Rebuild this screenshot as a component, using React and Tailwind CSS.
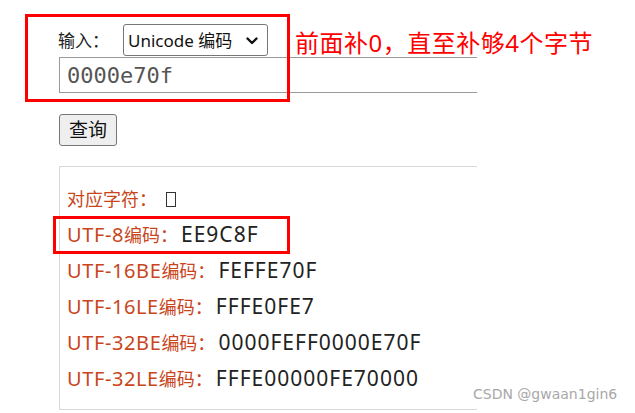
import React, { useState } from 'react';

const results = [
  { latin: 'UTF-8', value: 'EE9C8F' },
  { latin: 'UTF-16BE', value: 'FEFFE70F' },
  { latin: 'UTF-16LE', value: 'FFFE0FE7' },
  { latin: 'UTF-32BE', value: '0000FEFF0000E70F' },
  { latin: 'UTF-32LE', value: 'FFFE00000FE70000' },
];

const App = () => {
  const [code, setCode] = useState('0000e70f');
  const [encoding, setEncoding] = useState('unicode');

  return (
    <div
      className="relative w-[635px] h-[413px] overflow-hidden bg-white text-[#222]"
      style={{ fontFamily: '"Noto Sans", "Noto Sans CJK SC", sans-serif' }}
    >
      <div className="pl-[59px] pt-[24px]">
        {/* input row */}
        <div className="flex items-center h-[32px] -ml-[1px]">
          <span className="w-[65px] text-[17px] leading-none">输入：</span>
          <div className="relative">
            <select
              value={encoding}
              onChange={(e) => setEncoding(e.target.value)}
              className="appearance-none w-[145px] h-[32px] border border-[#767676] rounded-[3px] bg-white pl-[4px] text-[17px] leading-none text-[#111] outline-none"
            >
              <option value="unicode">Unicode 编码</option>
              <option value="utf8">UTF-8 编码</option>
            </select>
            <svg className="pointer-events-none absolute right-[10px] top-[13px] w-[12px] h-[8px]" viewBox="0 0 12 8" fill="none">
              <path d="M1.5 1.5 6 6l4.5-4.5" stroke="#111" strokeWidth="2.4" strokeLinecap="round" strokeLinejoin="round" />
            </svg>
          </div>
        </div>

        <input
          type="text"
          value={code}
          onChange={(e) => setCode(e.target.value)}
          className="block mt-[1px] w-[418px] h-[36px] border border-r-0 border-[#9a9a9a] pl-[7px] text-[22px] text-[#555] outline-none"
          style={{ fontFamily: '"DejaVu Sans Mono", monospace' }}
        />

        <button className="block mt-[21px] w-[58px] h-[32px] border border-[#767676] rounded-[3px] bg-[#efefef] text-[19px] leading-none text-[#111]">
          查询
        </button>

        {/* result panel */}
        <div className="mt-[20px] w-[418px] h-[244px] border-l border-t border-b border-[#d8d8d8] pt-[14px] pl-[7px]">
          <div className="flex items-center h-[36px]">
            <span className="text-[18px] text-[#c9461c]">对应字符：</span>
            <span className="ml-[9px] inline-block w-[10px] h-[15px] border-[1.5px] border-[#333]"></span>
          </div>
          {results.map((row) => (
            <div key={row.latin} className="flex items-center h-[36px] text-[#c9461c]">
              <span className="text-[20px] tracking-[0.6px]">{row.latin}</span>
              <span className="text-[18px]">编码：</span>
              <span className="ml-[3px] text-[21px] tracking-[1px] text-[#222]">{row.value}</span>
            </div>
          ))}
        </div>
      </div>

      {/* annotations */}
      <div className="absolute left-[25px] top-[14px] w-[265px] h-[88px] border-[3px] border-[#ff0000]"></div>
      <div className="absolute left-[295px] top-[29px] text-[24px] leading-[28px] tracking-[0.5px] text-[#ff0000] whitespace-nowrap">
        前面补0，直至补够4个字节
      </div>
      <div className="absolute left-[53px] top-[216px] w-[237px] h-[38px] border-[3px] border-[#ff0000]"></div>

      <div
        className="absolute left-[473px] top-[385px] text-[14px] leading-[18px] text-[#a8a8a8] whitespace-nowrap"
        style={{ fontFamily: '"DejaVu Sans", sans-serif' }}
      >
        CSDN @gwaan1gin6
      </div>
    </div>
  );
};

export default App;
